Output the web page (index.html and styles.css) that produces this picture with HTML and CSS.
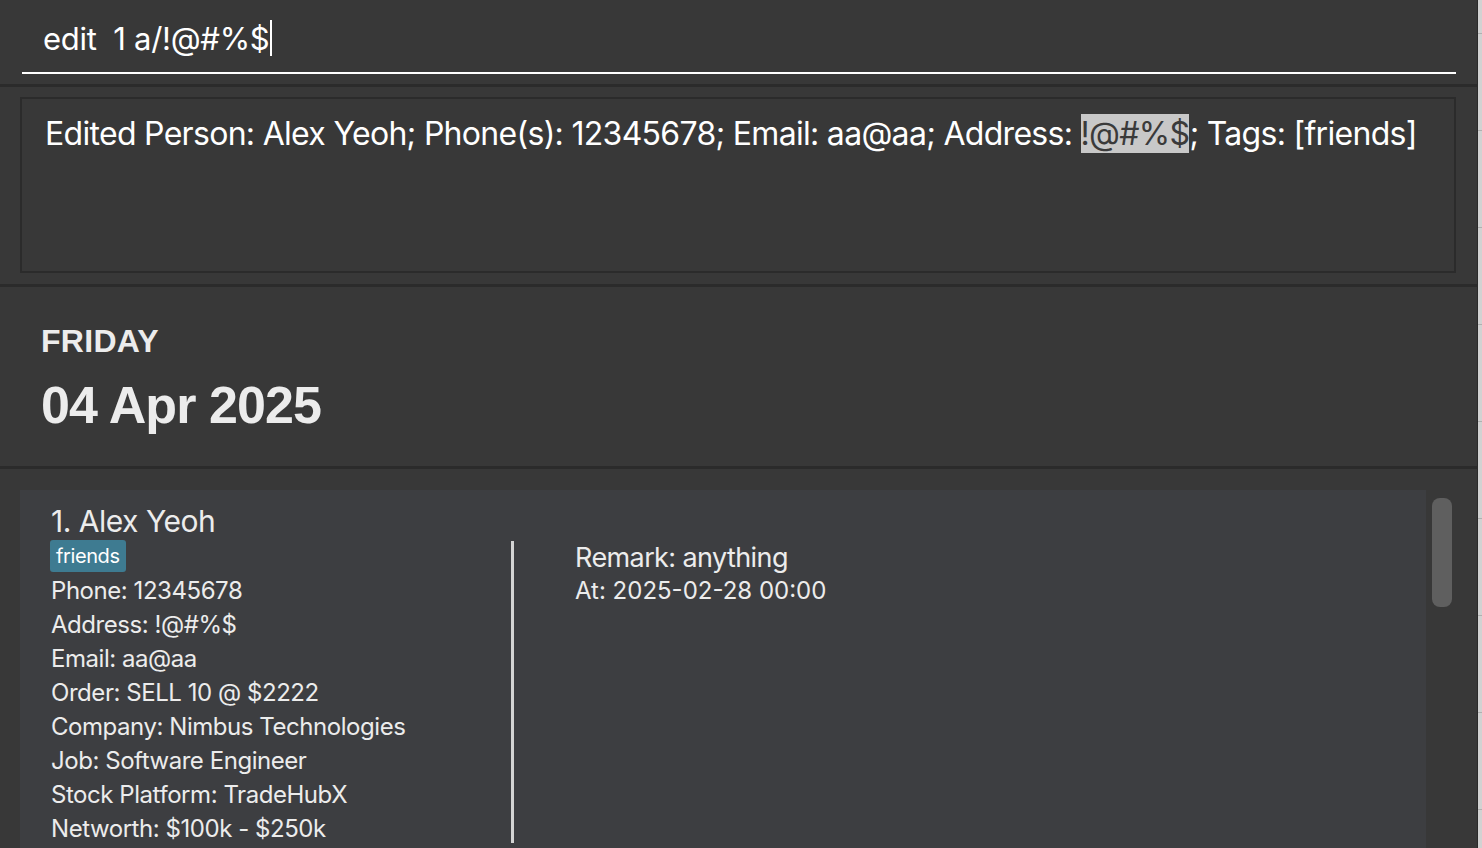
FILE: index.html
```html
<!DOCTYPE html>
<html>
<head>
<meta charset="utf-8">
<link rel="stylesheet" href="styles.css">
</head>
<body>
<div class="app">
  <div class="main">
    <div class="command">
      <div class="command-field"><span class="command-text">edit  1 a/!@#%$</span><span class="caret"></span></div>
    </div>
    <div class="sep"></div>
    <div class="result-wrap">
      <div class="result">Edited Person: Alex Yeoh; Phone(s): 12345678; Email: aa@aa; Address: <span class="sel">!@#%$</span>; Tags: [friends]</div>
    </div>
    <div class="sep"></div>
    <div class="date-panel">
      <div class="day">FRIDAY</div>
      <div class="date">04 Apr 2025</div>
    </div>
    <div class="sep"></div>
    <div class="list">
      <div class="card">
        <div class="card-left">
          <div class="name">1. Alex Yeoh</div>
          <div class="tags"><span class="tag">friends</span></div>
          <div class="field">Phone: 12345678</div>
          <div class="field">Address: !@#%$</div>
          <div class="field">Email: aa@aa</div>
          <div class="field">Order: SELL 10 @ $2222</div>
          <div class="field">Company: Nimbus Technologies</div>
          <div class="field">Job: Software Engineer</div>
          <div class="field">Stock Platform: TradeHubX</div>
          <div class="field">Networth: $100k - $250k</div>
        </div>
        <div class="divider"></div>
        <div class="card-right">
          <div class="remark">Remark: anything</div>
          <div class="at">At: 2025-02-28 00:00</div>
        </div>
      </div>
      <div class="scrollbar"><div class="thumb"></div></div>
    </div>
  </div>
  <div class="edge"></div>
</div>
</body>
</html>
```

FILE: styles.css
```css
html, body {
  margin: 0;
  padding: 0;
  height: 100%;
  overflow: hidden;
}
body {
  background: #383838;
  font-family: "Inter", "Noto Sans", sans-serif;
  color: #ffffff;
}
.app {
  display: flex;
  height: 848px;
}
.main {
  flex: 1;
  display: flex;
  flex-direction: column;
  min-width: 0;
  border-right: 1px solid #2a2a2a;
}
.edge {
  width: 4px;
  background: #d2d2d2;
  background-image: repeating-linear-gradient(to bottom, transparent 0, transparent 33px, #b0b0b0 33px, #b0b0b0 34px, transparent 34px, transparent 97px);
}
.command {
  height: 84px;
  padding: 0 21px 0 22px;
}
.command-field {
  border-bottom: 2px solid #ffffff;
  display: flex;
  align-items: center;
  padding-left: 21px;
  padding-top: 4px;
  box-sizing: border-box;
  height: 74px;
}
.command-text {
  font-size: 31px;
  white-space: pre;
  letter-spacing: -0.3px;
}
.caret {
  display: inline-block;
  width: 2px;
  height: 36px;
  background: #ffffff;
  margin-left: 1px;
}
.sep {
  height: 3px;
  background: #2b2b2b;
  flex: none;
}
.result-wrap {
  padding: 10px 21px 10px 20px;
  height: 197px;
  box-sizing: border-box;
}
.result {
  border: 2px solid #2b2b2b;
  height: 176px;
  box-sizing: border-box;
  padding: 15px 23px 0;
  font-size: 32px;
  letter-spacing: -0.7px;
  white-space: nowrap;
}
.sel {
  background: #c8c8c8;
  color: #3a3a3a;
}
.date-panel {
  height: 179px;
  box-sizing: border-box;
  padding: 34px 41px 0;
  font-family: "Liberation Sans", Arial, sans-serif;
  font-weight: bold;
  color: #ececec;
}
.day {
  font-size: 32px;
  line-height: 40px;
  letter-spacing: 0.3px;
}
.date {
  font-size: 52px;
  letter-spacing: -0.9px;
  line-height: 58px;
  margin-top: 15px;
}
.list {
  flex: 1;
  display: flex;
  padding: 21px 0 0 20px;
  min-height: 0;
}
.card {
  width: 1406px;
  background: #3d3e41;
  display: flex;
  color: #ececec;
}
.card-left {
  width: 460px;
  padding: 13px 0 0 31px;
  flex: none;
}
.name {
  font-size: 30px;
  line-height: 36px;
  letter-spacing: -0.5px;
}
.tags {
  height: 34px;
  margin-top: 1px;
}
.tag {
  display: inline-block;
  background: #3e7b91;
  color: #ffffff;
  font-size: 20px;
  line-height: 32px;
  padding: 0 6px;
  border-radius: 3px;
  letter-spacing: -0.4px;
  margin-left: -1px;
}
.field {
  font-size: 24px;
  line-height: 34px;
  letter-spacing: -0.45px;
}
.divider {
  width: 3px;
  background: #d4d4d4;
  margin-top: 51px;
  margin-bottom: 5px;
  flex: none;
}
.card-right {
  padding: 51px 0 0 61px;
}
.remark {
  font-size: 27px;
  line-height: 34px;
  letter-spacing: -0.6px;
}
.at {
  font-size: 24px;
  line-height: 32px;
  letter-spacing: 0px;
}
.scrollbar {
  width: 30px;
  padding: 8px 0 0 6px;
  box-sizing: border-box;
}
.thumb {
  width: 20px;
  height: 109px;
  background: #5f5f5f;
  border-radius: 8px;
}
```
